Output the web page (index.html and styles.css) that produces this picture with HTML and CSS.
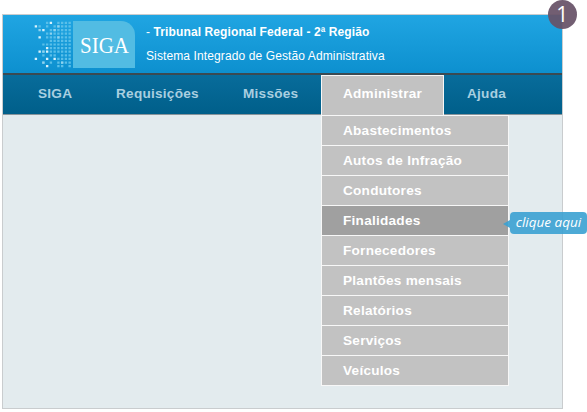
FILE: index.html
```html
<!DOCTYPE html>
<html lang="pt-BR">
<head>
<meta charset="utf-8">
<title>SIGA</title>
<link rel="stylesheet" href="styles.css">
</head>
<body>
<div class="window">
  <header class="header">
    <svg class="dots" width="39" height="47" viewBox="-.5 -.5 10.4 13" preserveAspectRatio="none">
      <path class="dim" d="M3 0h.01M6 0h.01M7 0h.01M8 0h.01M9 0h.01M1 1h.01M3 1h.01M5 1h.01M6 1h.01M7 1h.01M8 1h.01M9 1h.01M4 2h.01M5 2h.01M6 2h.01M7 2h.01M8 2h.01M9 2h.01M3 3h.01M5 3h.01M6 3h.01M7 3h.01M8 3h.01M9 3h.01M3 4h.01M4 4h.01M5 4h.01M6 4h.01M7 4h.01M8 4h.01M9 4h.01M4 5h.01M5 5h.01M6 5h.01M7 5h.01M8 5h.01M9 5h.01M2 6h.01M3 6h.01M4 6h.01M5 6h.01M6 6h.01M7 6h.01M8 6h.01M9 6h.01M4 7h.01M5 7h.01M6 7h.01M7 7h.01M8 7h.01M9 7h.01M2 8h.01M4 8h.01M5 8h.01M6 8h.01M7 8h.01M8 8h.01M9 8h.01M2 9h.01M4 9h.01M5 9h.01M7 9h.01M8 9h.01M9 9h.01M6 10h.01M7 10h.01M8 10h.01M9 10h.01M2 11h.01M4 11h.01M6 11h.01M7 11h.01M8 11h.01M9 11h.01M6 12h.01M7 12h.01M9 12h.01"/>
      <path class="bright" d="M4 0h.01M0 1h.01M2 2h.01M1 4h.01M3 7h.01M1 8h.01M3 8h.01M0 10h.01M3 10h.01M5 10h.01M3 12h.01"/>
      <path class="mid" d="M1 2h.01M5 2h.01M4 3h.01M6 4h.01M2 8h.01M2 11h.01M7 11h.01M6 1h.01"/>
    </svg>
    <div class="logo">
      <svg width="54" height="34" viewBox="0 0 54 34"><text x="0" y="21" textLength="49" lengthAdjust="spacingAndGlyphs">SIGA</text></svg>
    </div>
    <div class="titles">
      <div class="org"><span>-</span> Tribunal Regional Federal - 2ª Região</div>
      <div class="system">Sistema Integrado de Gestão Administrativa</div>
    </div>
  </header>
  <nav class="nav">
    <a class="item siga">SIGA</a>
    <a class="item req">Requisições</a>
    <a class="item mis">Missões</a>
    <div class="item open">Administrar
      <ul class="menu">
        <li>Abastecimentos</li>
        <li>Autos de Infração</li>
        <li>Condutores</li>
        <li class="active">Finalidades</li>
        <li>Fornecedores</li>
        <li>Plantões mensais</li>
        <li>Relatórios</li>
        <li>Serviços</li>
        <li>Veículos</li>
      </ul>
    </div>
    <a class="item help">Ajuda</a>
  </nav>
</div>
<div class="step"><svg width="29" height="29" viewBox="0 0 29 29"><text x="14.3" y="22" text-anchor="middle">1</text></svg></div>
<div class="callout">clique aqui</div>
</body>
</html>
```
FILE: styles.css
```css
* { box-sizing: border-box; }
body {
  margin: 0;
  height: 412px;
  padding: 14px 0 0 2px;
  background: #fff;
  overflow: hidden;
  font-family: "Liberation Sans", Arial, sans-serif;
}
.window {
  width: 561px;
  height: 395px;
  border: 1px solid #c9ccce;
  background: #e3ebee;
}
.header {
  display: flex;
  height: 60px;
  padding: 6px 0 0 31px;
  background: linear-gradient(#20a5e2, #0d90cf);
  border-bottom: 2px solid #3b4a52;
  color: #fff;
}
.dots { flex: none; }
.dots path {
  fill: none;
  stroke-width: .62;
  stroke-linecap: square;
}
.dots .dim { stroke: #5abfe9; }
.dots .mid { stroke: #8fd2ee; }
.dots .bright { stroke: #daf2fb; }
.logo {
  width: 62px;
  height: 47px;
  padding: 11px 0 0 7px;
  background: #52bce3;
  border-radius: 0 14px 0 0;
}
.logo svg { display: block; overflow: visible; }
.logo text {
  font: 24px "Liberation Serif", serif;
  fill: #fff;
}
.titles {
  margin-left: 11px;
  padding-top: 3px;
  font-size: 12px;
  line-height: 16px;
  letter-spacing: .11px;
  white-space: nowrap;
}
.org { font-weight: bold; }
.org span { font-weight: normal; }
.system { margin-top: 8px; }
.nav {
  display: flex;
  height: 40px;
  background: linear-gradient(#086c9b, #005f8a);
  border-bottom: 1px solid #87949b;
  color: #a9cfe0;
  font-size: 13.6px;
  font-weight: bold;
  line-height: 38px;
  letter-spacing: .25px;
}
.item { white-space: nowrap; }
.siga { width: 78px; margin-left: 35px; }
.req { width: 127px; }
.mis { width: 78px; }
.open {
  position: relative;
  width: 123px;
  height: 40px;
  padding-left: 21px;
  border: 1px solid #f7f7f7;
  border-bottom: 0;
  background: #c2c2c2;
  color: #fff;
  line-height: 36px;
}
.help { padding-left: 23px; }
.menu {
  position: absolute;
  z-index: 1;
  top: 39px;
  left: -1px;
  width: 188px;
  margin: 0;
  padding: 0;
  list-style: none;
  border: solid #f7f7f7;
  border-width: 0 1px 1px;
}
.menu li {
  height: 30px;
  padding-left: 21px;
  border-top: 1px solid #f7f7f7;
  background: #c2c2c2;
  line-height: 29px;
}
.menu .active { background: #a0a0a0; }
.step {
  position: absolute;
  left: 548px;
  top: 0;
  width: 29px;
  height: 29px;
  border-radius: 50%;
  background: rgba(103, 82, 103, .93);
}
.step svg { display: block; }
.step text {
  font: 21px "Open Sans", sans-serif;
  fill: #fff;
}
.callout {
  position: absolute;
  z-index: 2;
  left: 510px;
  top: 212px;
  width: 77px;
  height: 22px;
  border-radius: 4px;
  background: rgba(58, 161, 210, .9);
  color: #fff;
  font: italic 13.5px/21px "Open Sans", sans-serif;
  text-align: center;
  white-space: nowrap;
}
.callout::before {
  content: "";
  position: absolute;
  left: -7px;
  top: 8px;
  border: solid transparent;
  border-width: 4px 7px 4px 0;
  border-right-color: rgba(58, 161, 210, .9);
}
```
